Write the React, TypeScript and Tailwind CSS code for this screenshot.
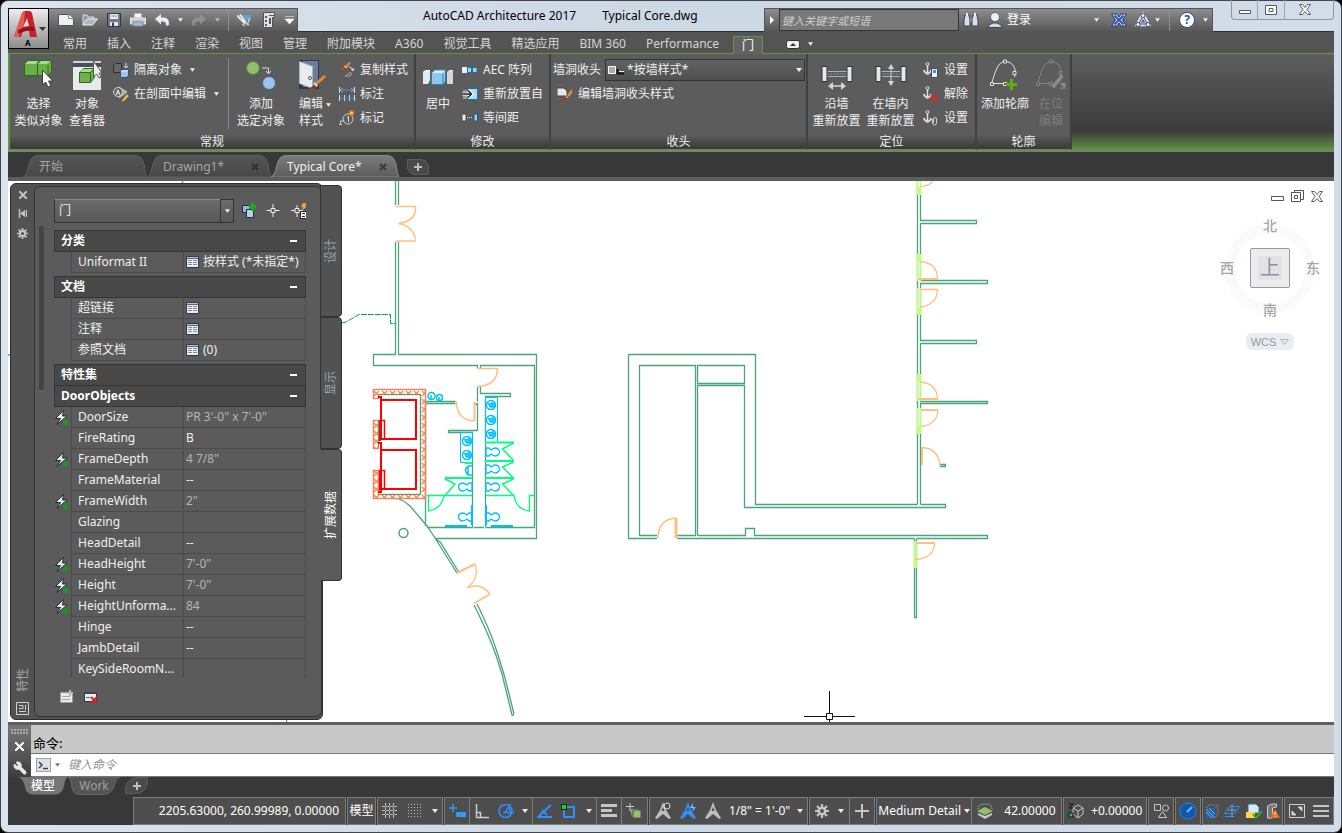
import type { ReactNode } from 'react';
import { Wrench } from 'lucide-react';

type Kids = { children?: ReactNode };

function Svg({ w = 16, h = 16, children }: Kids & { w?: number; h?: number }) {
  return (
    <svg width={w} height={h} viewBox={`0 0 ${w} ${h}`} fill="none" className="shrink-0" aria-hidden="true">
      {children}
    </svg>
  );
}

const Caret = ({ color = '#f0f0f0', size = 6 }: { color?: string; size?: number }) => (
  <svg width={size} height="4" viewBox="0 0 6 4" className="shrink-0" aria-hidden="true">
    <path d="M0 0h6L3 4z" fill={color} />
  </svg>
);

/* ---------- quick access icons ---------- */

const NewIcon = () => (
  <Svg><path d="M.5 2.5h10l5 4v7H.5z" fill="#eef0f2" stroke="#4d5560" /><path d="M10.500 2.500v4h5" stroke="#7d8790" fill="#fff" /></Svg>
);
const OpenIcon = () => (
  <Svg><path d="M1 13V3h4l1 2h6v2" fill="#8f98a3" stroke="#dde2e8" /><path d="M1 13l4-6h10.500l-5 6z" fill="#aeb6c0" stroke="#eef1f4" /></Svg>
);
const SaveIcon = () => (
  <Svg><path d="M1.500 1.500h13v13h-13z" fill="#6f7a88" stroke="#303845" /><path d="M4 2h8v5H4z" fill="#e9edf1" /><path d="M5 4h6" stroke="#7a8490" /><path d="M4 10h8v4H4z" fill="#dfe4e9" /><path d="M6 10.500h2V14H6z" fill="#39424e" /></Svg>
);
const PrintIcon = () => (
  <Svg><path d="M4 1h8v5H4z" fill="#f5f7f9" stroke="#7d8792" /><path d="M.500 6h15v6H.500z" fill="#c9cfd6" stroke="#e9ecef" /><path d="M3 10h10v4H3z" fill="#dbe7f3" stroke="#6b7683" /><path d="M4 12h8" stroke="#4a8fd0" /></Svg>
);
const UndoIcon = ({ flip = false, color = '#e9edf1' }: { flip?: boolean; color?: string }) => (
  <svg width="16" height="16" viewBox="0 0 16 16" className={flip ? '-scale-x-100' : ''} aria-hidden="true">
    <path d="M1 7l6-5v3.500h2.500q6 0 5.500 7l-1 1h-2q.500-4-3.500-4H7v3z" fill={color} />
  </svg>
);
const PlansIcon = () => (
  <Svg><path d="M4 3h11l-4 6z" fill="#56a8dc" /><path d="M0 3.500l8 8M3 2.500l6 8" stroke="#e6e9ec" strokeWidth="2" /><path d="M5 12l3 2M8 11l4 2M13 6l-3 7" stroke="#c4cad1" strokeWidth="1.500" /></Svg>
);
const SheetIcon = () => (
  <Svg><path d="M2.500 .500h11v5h-2v10h-9z" fill="#dfe3e7" stroke="#4c545e" /><path d="M4 4h2v2H4zM4 8h2v2H4zM4 12h2v2H4zM8 6h2v6H8z" fill="#525b66" /><path d="M8 3.500h5" stroke="#525b66" /></Svg>
);

const Gear = ({ size }: { size: number }) => (
  <svg width={size} height={size} viewBox="0 0 16 16" fill="none" aria-hidden="true">
    <path d="M8 0v16M0 8h16M2.300 2.300l11.400 11.400M13.700 2.300L2.300 13.700" stroke="#c6c6c6" strokeWidth="2.500" />
    <circle cx="8" cy="8" r="5" fill="#c6c6c6" />
    <circle cx="8" cy="8" r="2.200" fill="#505050" />
  </svg>
);

/* ---------- ribbon large icons ---------- */

const SelectSimilar = () => (
  <Svg w={32} h={32}>
    <path d="M1.500 5.500l3-4h12l-2 4v11h-13z" fill="#6aae4a" stroke="#2c6b1d" />
    <path d="M14.500 5.500l3-4h11v11l-3 4h-11z" fill="#6aae4a" stroke="#2c6b1d" />
    <path d="M2 5l3-3h10l-2 3zM15 5l3-3h9l-3 3z" fill="#a7dc8c" />
    <path d="M25 6v10" stroke="#2c6b1d" />
    <path d="M19.500 11v15l3-3 2.500 5 3-1.500-2.500-4.500h4.500z" fill="#fff" stroke="#3b3b3b" />
  </Svg>
);
const ObjectViewer = () => (
  <Svg w={32} h={32}>
    <path d="M2 3h28v28H2z" fill="#e8ebee" /><path d="M2 2h28v6H2z" fill="#4a4f57" /><path d="M2 2h28v2H2z" fill="#cfd4da" />
    <path d="M8.500 13.500l4-4h11v9l-4 5h-11z" fill="#6fb04e" stroke="#2c6b1d" /><path d="M8.500 13.500h11l4-4M19.500 13.500v10" stroke="#2c6b1d" />
    <path d="M9 13l3-3h10l-3 3z" fill="#a7dc8c" />
    <path d="M22.500 2v16l3-3 2.500 4 2-1-2-4h3z" fill="#eee" stroke="#555" />
  </Svg>
);
const AddSelected = () => (
  <Svg w={32} h={32}>
    <circle cx="8" cy="9" r="6.500" fill="#8fc06e" stroke="#4f7f36" /><circle cx="24" cy="24" r="6.500" fill="#9cc3ec" stroke="#3e628f" />
    <path d="M17 9h6.500v5M21 12l2.500 3 2.500-3" stroke="#dadada" />
  </Svg>
);
const EditStyle = () => (
  <Svg w={32} h={32}>
    <path d="M4 1h20v29H4z" fill="#2e3846" /><path d="M8 2h15v26H8z" fill="#6b7f97" /><path d="M4.500 2.500l13 5v22l-13-5z" fill="#e9ecef" stroke="#aeb5bd" />
    <circle cx="15" cy="19" r="1.500" fill="#fff" stroke="#555" />
    <path d="M20 24l9-8 2 2-9 8z" fill="#e08a3c" /><path d="M14 29q4-1 5-4l3 3q-3 4-8 2z" fill="#7a4522" /><path d="M19 24l3 3" stroke="#ddd" strokeWidth="2" />
  </Svg>
);
const CenterIcon = () => (
  <Svg w={32} h={32}>
    <path d="M1 13l3-2h4v10l-2 4H1z" fill="#e6e9ec" /><path d="M25 13l3-2h3v14h-6z" fill="#d3d7dc" /><path d="M1 13l3-2h4l-2 2zM25 13l3-2h3" fill="#fff" />
    <path d="M9.500 14.500l3-3.500h11v11l-2 3.500h-12z" fill="#8cc9ea" stroke="#2e7fb5" /><path d="M10 14l3-2.500h10l-2 2.500z" fill="#d2effd" /><path d="M21 14.500v11" stroke="#2e7fb5" />
  </Svg>
);
const AlongWall = ({ inside = false }: { inside?: boolean }) => (
  <Svg w={32} h={32}>
    <path d="M6 12h20v6H6z" fill="#565c64" /><path d="M6 12.500h20M6 17.500h20" stroke="#aab1bb" /><path d="M6 15h20" stroke="#8d949d" strokeDasharray="2 1" />
    <path d="M1 7.500h5v15H1zM26 7.500h5v15h-5z" fill="#e3e7ee" stroke="#2f343b" />
    {inside ? (
      <><path d="M16 6v20" stroke="#d4d4d4" /><path d="M16 5l3 5h-6zM16 27l3-5h-6z" fill="#d4d4d4" /></>
    ) : (
      <><path d="M8 27h16" stroke="#d4d4d4" strokeWidth="1.500" /><path d="M7 27l5-4v8zM25 27l-5-4v8z" fill="#d4d4d4" /></>
    )}
  </Svg>
);
const ProfileIcon = ({ edit = false }: { edit?: boolean }) => {
  const c = edit ? '#858585' : '#e2e2e2';
  return (
    <Svg w={32} h={32}>
      <path d="M2.500 24.500C6 15 8 2.500 16 2.500S28 10 25.500 18M3 24.500h13" stroke={c} />
      <path d="M14.500 1h3v3h-3zM1.500 23.500h3v3h-3zM24 12.500h3v3h-3zM14.500 23.500h3v3h-3z" fill="#5c5c5c" stroke={c} />
      {edit ? <path d="M17 27l9-11 2 2-9 11zM25 24l5 5v-5M30 29h-5" fill="#8b8b8b" stroke="#8b8b8b" /> : <path d="M22.500 20v11M17 25.500h11" stroke="#5cb010" strokeWidth="3" />}
    </Svg>
  );
};

/* ---------- ribbon small icons ---------- */

const IsolateIcon = () => (
  <Svg><path d="M.500 3.500l2-2h6v7l-2 2h-6z" fill="#666" stroke="#2e2e2e" /><path d="M13 1v5M11 4l2 2 2-2" stroke="#ddd" /><path d="M7.500 9.500l2-2h6v6l-2 2h-6z" fill="#9cc3ec" stroke="#33557f" /><path d="M8 9h6l1-1" stroke="#e8f3ff" /></Svg>
);
const SectionEditIcon = () => (
  <Svg><path d="M6 1l8 5-8 6" fill="#aaa" stroke="#ccc" /><circle cx="5" cy="6" r="4.500" fill="#666" stroke="#d0d0d0" /><path d="M3 9l2-5 2 5M4 7h2" stroke="#eee" /><path d="M9 14l5-6 2 2-5 5-2 1z" fill="#f1c14c" stroke="#7a5a1a" strokeWidth=".5" /></Svg>
);
const CopyStyleIcon = () => (
  <Svg><path d="M6 4l4-4 2 1-4 5z" fill="#e0843a" /><path d="M0 7q3 0 5-3l3 2q-2 5-8 1z" fill="#9a5527" /><path d="M5 4l3 2" stroke="#eee" /><path d="M10 5q4 0 4 4M12 7l2 2 1-3" stroke="#ccc" /><path d="M6 14q3-1 5-4l2 2q-2 4-7 2z" fill="#777" stroke="#999" /></Svg>
);
const DimIcon = () => (
  <Svg><path d="M.500 1v6M15.500 1v6M.500 9v6M5.500 9v6M10.500 9v6M15.500 9v6" stroke="#ddd" /><path d="M1 4h14M1 12h14" stroke="#3f8fe8" /><path d="M4 2L1 4l3 2M12 2l3 2-3 2" stroke="#6aaef5" /></Svg>
);
const TagIcon = () => (
  <Svg><path d="M1.500 15v-4h4M0 14.500h3" stroke="#ccc" /><circle cx="9" cy="9" r="5" stroke="#ccc" /><path d="M8 7.500l1.500-1V12" stroke="#ddd" /><path d="M12.500 0v6M9.500 3h6M10.500 1l4 4M14.500 1l-4 4" stroke="#f26b1d" strokeWidth="1.500" /><circle cx="12.500" cy="3" r="1.500" fill="#ffd24a" /></Svg>
);
const ArrayIcon = () => (
  <Svg><path d="M0 5h5v6H0z" fill="#eef1f4" /><path d="M5.500 5.500h4v5h-4zM10.500 5.500h4.500v5h-4.500z" fill="#9bd3f2" stroke="#1f6ca8" /></Svg>
);
const MoveFromIcon = () => (
  <Svg><path d="M1 4h5v9H1z" fill="#999" /><path d="M5.500 2.500h10v11h-10z" fill="#a9dcf5" stroke="#1f6ca8" /><path d="M0 8h10M6 4.500L10 8l-4 3.500" stroke="#fff" strokeWidth="3" /><path d="M0 8h9M6 4.500L9.500 8 6 11.500" stroke="#222" strokeWidth="1.500" /></Svg>
);
const SpaceIcon = () => (
  <Svg><path d="M0 4h4v7H0z" fill="#eee" stroke="#444" /><path d="M12 4h3.500v7H12z" fill="#9bd3f2" stroke="#1f4c88" /><path d="M5 7.500h6" stroke="#ddd" strokeDasharray="1 1" /></Svg>
);
const EndcapIcon = () => (
  <Svg><path d="M0 2h7l3 3v5H0z" fill="#e6e9ec" stroke="#444" /><path d="M3 13q3 0 5-4l3 3q-3 4-8 1z" fill="#8a4f27" /><path d="M10 9l5-6v4l-3 4z" fill="#e08a3c" /><path d="M8 9l3 3" stroke="#ddd" /></Svg>
);
const WallCapIcon = () => (
  <Svg><path d="M.500 4.500h7v7h-7z" fill="#aaa" stroke="#fff" /><path d="M9.500 7v4.500H16" stroke="#111" strokeWidth="2" /><path d="M11 9.500h5" stroke="#eee" /></Svg>
);
const AnchorIcon = ({ kind }: { kind: 'set' | 'release' | 'attach' }) => (
  <Svg>
    <path d="M4.500 3v8" stroke="#e0e0e0" strokeWidth="1.500" /><circle cx="4.500" cy="2" r="1.500" stroke="#e0e0e0" /><path d="M0 8l2 0q0 2 2.500 2.500Q7 10 7 8h2q0 3-4.500 5Q0 11 0 8z" fill="#d4d4d4" />
    {kind === 'set' && <><path d="M8.500 6.500h6v9h-6z" fill="#eef3f8" stroke="#3c4a5a" /><path d="M10 8h3v3h-3z" fill="#3f8fe8" /></>}
    {kind === 'release' && <path d="M8 9l6 6M14 9l-6 6" stroke="#e02a20" strokeWidth="2" />}
    {kind === 'attach' && <path d="M9.500 9v4a2 2 0 004 0V9a1.500 1.500 0 00-3 0v4" stroke="#ccc" />}
  </Svg>
);

/* ---------- title bar ---------- */

function TitleBar() {
  return (
    <header className="flex h-8 border-b border-[#2e2e2e]">
      <div className="ml-10 mt-2 flex h-6 w-[250px] shrink-0 items-center gap-2 border border-[#555] bg-linear-to-b from-[#8d8d8d] to-[#585858] pl-[9px]">
        <button aria-label="新建"><NewIcon /></button>
        <button aria-label="打开"><OpenIcon /></button>
        <button aria-label="保存"><SaveIcon /></button>
        <button aria-label="打印"><PrintIcon /></button>
        <button aria-label="放弃" className="flex items-center gap-2"><UndoIcon /><Caret size={5} /></button>
        <button aria-label="重做" className="flex items-center gap-2"><UndoIcon flip color="#8f8f8f" /><Caret size={5} color="#bbb" /></button>
        <span className="h-full w-px bg-[#929292]" />
        <button aria-label="工具"><PlansIcon /></button>
        <button aria-label="图纸"><SheetIcon /></button>
        <button aria-label="自定义"><Svg w={9} h={8}><path d="M0 .500h9M0 3h9L4.500 8z" stroke="#fff" fill="#fff" strokeWidth=".5" /></Svg></button>
      </div>
      <div className="flex flex-1 gap-[26px] whitespace-nowrap pl-[125px] pt-[6px] text-xs leading-5 text-black">
        <span>AutoCAD Architecture 2017</span>
        <span>Typical Core.dwg</span>
      </div>
      <div className="mr-[18px] mt-2 flex h-6 w-[449px] shrink-0 items-center border border-[#555] bg-linear-to-b from-[#8d8d8d] to-[#585858] text-xs text-white">
        <button aria-label="展开" className="flex w-[14px] justify-center"><Svg w={5} h={8}><path d="M0 0l4 4-4 4z" fill="#fff" /></Svg></button>
        <input
          aria-label="搜索"
          placeholder="键入关键字或短语"
          className="h-full w-[180px] border border-[#333] bg-[#787878] px-[2px] text-[11px] italic placeholder:text-[#cfcfcf]"
        />
        <button aria-label="查找" className="ml-1">
          <Svg><path d="M2 3h4l1 4v7H1V8zM10 3h4l1 5v6H9V7z" fill="#d8dde6" stroke="#39424e" /><path d="M6 6h4v4H6z" fill="#7a8490" /><path d="M3 1h2v3H3zM11 1h2v3h-2z" fill="#eef1f5" /></Svg>
        </button>
        <button className="ml-2 flex items-center gap-1">
          <Svg><circle cx="8" cy="5" r="4.500" fill="#eef1f5" stroke="#5c6674" /><path d="M1 15.500q0-3 5-4.500h4q5 1.500 5 4.500z" fill="#d5dae2" stroke="#444" /></Svg>
          登录
        </button>
        <button aria-label="帐户" className="ml-auto"><Caret size={5} /></button>
        <button aria-label="Exchange" className="ml-3">
          <Svg><path d="M.500 2h5.500l2 3 2-3h5.500l-4 6 4 6H10l-2-3-2 3H.500l4-6z" fill="#cfdcf5" stroke="#22356e" /><path d="M3.500 3.500L8 8l-4.500 4.500M12.500 3.500L8 8l4.500 4.500" stroke="#2f55b0" strokeWidth="2" /></Svg>
        </button>
        <button aria-label="A360" className="ml-2 flex items-center gap-1">
          <Svg><path d="M8 3L2.500 12.500h11z" stroke="#e3e9f6" strokeWidth="3.500" /><path d="M8 4L3.500 12h9z" stroke="#33497c" /><circle cx="8" cy="3.500" r="2" fill="#fff" stroke="#33497c" /><circle cx="3" cy="12.500" r="2" fill="#fff" stroke="#33497c" /><circle cx="13" cy="12.500" r="2" fill="#fff" stroke="#33497c" /></Svg>
          <Caret size={5} />
        </button>
        <span className="mx-[9px] h-full w-px bg-[#929292]" />
        <button aria-label="帮助" className="mr-1 flex items-center gap-2">
          <span className="flex size-4 items-center justify-center rounded-full border border-[#33507e] bg-white text-xs font-bold text-[#1c58ae]">?</span>
          <Caret size={5} />
        </button>
      </div>
      <div className="flex h-5 w-[103px] shrink-0 rounded-b border border-t-0 border-[#8d98a5]">
        <button aria-label="最小化" className="flex w-[25px] items-center justify-center"><Svg w={12} h={10}><path d="M.500 5.500h11v3H.500z" fill="#fff" stroke="#545b66" /></Svg></button>
        <button aria-label="还原" className="flex w-7 items-center justify-center border-x border-[#9ba6b2]"><Svg w={12} h={10}><path d="M.500.500h11v9H.500zM4 3.500h4v3H4z" fill="#fff" stroke="#545b66" /></Svg></button>
        <button aria-label="关闭" className="flex flex-1 items-center justify-center pr-2"><CloseX /></button>
      </div>
    </header>
  );
}

const CloseX = () => (
  <Svg w={12} h={11}><path d="M.500.500h3L6 3.500l2.500-3h3L8 5.500l3.500 5h-3L6 7.500l-2.500 3h-3L4 5.500z" fill="#fff" stroke="#545b66" /></Svg>
);

function AppButton() {
  return (
    <button aria-label="应用程序菜单" className="absolute left-0 top-[7px] flex h-[41px] w-[41px] flex-col border border-black bg-linear-to-b from-[#ededed] to-[#8d8d8d]">
      <Svg w={39} h={39}>
        <path d="M5 28L13 4q1-2 3-2h4q2 0 3 2l5 24h-7l-1-6-6-1-2 7z" fill="#c8202a" />
        <path d="M5 28L13 4q1-2 3-2l-1 12-5 14z" fill="#e65a5a" />
        <path d="M18 9l2 8-6 1z" fill="#d9d9d9" /><path d="M9 21q8-4 16-3l1 4q-8-2-17 3z" fill="#951019" />
        <path d="M30 18h7l-3.500 4z" fill="#2b3340" />
        <text x="16" y="37" fontSize="8" fontWeight="700" fill="#000">A</text>
      </Svg>
    </button>
  );
}

/* ---------- ribbon ---------- */

const ribbonTabs = ['常用', '插入', '注释', '渲染', '视图', '管理', '附加模块', 'A360', '视觉工具', '精选应用', 'BIM 360', 'Performance'];

function RibbonTabs() {
  return (
    <nav className="flex h-[21px] items-end bg-[#545454] pl-[45px] text-xs text-[#d4d4d4]">
      {ribbonTabs.map((tab) => (
        <button key={tab} className="whitespace-nowrap px-[10px] leading-[18px]">{tab}</button>
      ))}
      <button className="relative top-px ml-1 h-[18px] w-[30px] border border-b-0 border-[#619443] bg-[#636363] leading-4 text-white">门</button>
      <button aria-label="最小化功能区" className="ml-[23px] flex h-[18px] items-center gap-2">
        <Svg w={14} h={9}><rect x=".5" y=".5" width="13" height="8" rx="2" fill="#eee" stroke="#333" /><path d="M4 6h6L7 3z" fill="#333" /></Svg>
        <Caret size={5} />
      </button>
    </nav>
  );
}

function BigButton({ icon, lines, caret, off, w }: { icon: ReactNode; lines: string[]; caret?: boolean; off?: boolean; w: string }) {
  return (
    <button disabled={off} className={`flex shrink-0 flex-col items-center whitespace-nowrap pt-[5px] ${w} ${off ? 'text-[#7c7c7c]' : 'text-[#f0f0f0]'}`}>
      {icon}
      <span className="relative mt-1 block leading-[17px]">
        {lines.map((l) => <span key={l} className="block">{l}</span>)}
        {caret && <span className="absolute -right-2 top-2"><Caret size={5} /></span>}
      </span>
    </button>
  );
}

function SmallButton({ icon, label, caret }: { icon: ReactNode; label: string; caret?: boolean }) {
  return (
    <button className="flex h-6 items-center gap-[5px] whitespace-nowrap text-[#f0f0f0]">
      {icon}
      {label}
      {caret && <span className="ml-[3px]"><Caret size={5} /></span>}
    </button>
  );
}

function Panel({ title, w, children }: Kids & { title: string; w: string }) {
  return (
    <section className={`flex shrink-0 flex-col border-b border-r-2 border-b-[#619443] border-r-[#414141] bg-[#5c5c5c] ${w}`}>
      <div className="flex flex-1 items-start">{children}</div>
      <h2 className="h-[14px] bg-linear-to-b from-[#5c5c5c] to-[#383838] text-center leading-[14px] text-[#f0f0f0]">{title}</h2>
    </section>
  );
}

function Ribbon() {
  return (
    <div className="flex h-[99px] overflow-hidden border-b-2 border-l-2 border-t border-b-[#76846e] border-l-[#619443] border-t-[#619443] bg-linear-to-b from-[#5e5e5e] via-[#3b3b3b] via-80% to-[#619443] text-xs">
      <Panel title="常规" w="w-[406px]">
        <BigButton w="w-[57px]" icon={<SelectSimilar />} lines={['选择', '类似对象']} />
        <BigButton w="w-10" icon={<ObjectViewer />} lines={['对象', '查看器']} />
        <div className="ml-[6px] mt-1 w-28">
          <SmallButton icon={<IsolateIcon />} label="隔离对象" caret />
          <SmallButton icon={<SectionEditIcon />} label="在剖面中编辑" caret />
        </div>
        <span className="ml-[3px] mt-1 h-[72px] w-px bg-[#858585]" />
        <BigButton w="w-[64px]" icon={<AddSelected />} lines={['添加', '选定对象']} />
        <BigButton w="w-9" icon={<EditStyle />} lines={['编辑', '样式']} caret />
        <div className="ml-[10px] mt-1">
          <SmallButton icon={<CopyStyleIcon />} label="复制样式" />
          <SmallButton icon={<DimIcon />} label="标注" />
          <SmallButton icon={<TagIcon />} label="标记" />
        </div>
      </Panel>
      <Panel title="修改" w="w-[135px]">
        <BigButton w="w-11" icon={<CenterIcon />} lines={['居中']} />
        <div className="ml-[2px] mt-1">
          <SmallButton icon={<ArrayIcon />} label="AEC 阵列" />
          <SmallButton icon={<MoveFromIcon />} label="重新放置自" />
          <SmallButton icon={<SpaceIcon />} label="等间距" />
        </div>
      </Panel>
      <Panel title="收头" w="w-[257px]">
        <div className="w-full pl-[2px] pr-[1px] pt-1 text-[#f0f0f0]">
          <div className="flex h-6 items-center gap-1">
            <label htmlFor="endcap">墙洞收头</label>
            <div className="relative flex-1">
              <select id="endcap" className="h-[22px] w-full appearance-none border border-[#333] bg-linear-to-b from-[#636363] to-[#505050] pl-[21px] text-xs">
                <option>*按墙样式*</option>
              </select>
              <span className="pointer-events-none absolute left-[3px] top-[3px]"><WallCapIcon /></span>
              <span className="pointer-events-none absolute right-[2px] top-[9px] flex"><Caret size={8} /></span>
            </div>
          </div>
          <div className="pl-1"><SmallButton icon={<EndcapIcon />} label="编辑墙洞收头样式" /></div>
        </div>
      </Panel>
      <Panel title="定位" w="w-[169px]">
        <BigButton w="w-[57px]" icon={<AlongWall />} lines={['沿墙', '重新放置']} />
        <BigButton w="w-[51px]" icon={<AlongWall inside />} lines={['在墙内', '重新放置']} />
        <div className="ml-[7px] mt-1">
          <SmallButton icon={<AnchorIcon kind="set" />} label="设置" />
          <SmallButton icon={<AnchorIcon kind="release" />} label="解除" />
          <SmallButton icon={<AnchorIcon kind="attach" />} label="设置" />
        </div>
      </Panel>
      <Panel title="轮廓" w="w-[95px]">
        <BigButton w="w-[56px]" icon={<ProfileIcon />} lines={['添加轮廓']} />
        <BigButton w="w-9" icon={<ProfileIcon edit />} lines={['在位', '编辑']} off />
      </Panel>
    </div>
  );
}

/* ---------- drawing tabs ---------- */

function DrawingTab({ label, w, active, closable }: { label: string; w: string; active?: boolean; closable?: boolean }) {
  return (
    <div className={`relative flex h-[22px] shrink-0 items-center justify-between pl-4 pr-3 pt-px ${w}`}>
      <svg className="absolute inset-0 h-full w-full" viewBox="0 0 124 22" preserveAspectRatio="none" aria-hidden="true">
        <defs>
          <linearGradient id={active ? 'tabOn' : 'tabOff'} x2="0" y2="1">
            <stop stopColor={active ? '#7c7c7c' : '#555'} /><stop offset="1" stopColor={active ? '#5c5c5c' : '#474747'} />
          </linearGradient>
        </defs>
        <path d="M0 22Q4 20 5 13Q7 1 14 .5H112Q119 .5 121 9Q122 19 124 22z" fill={active ? 'url(#tabOn)' : 'url(#tabOff)'} stroke={active ? '#8a8a8a' : '#5e5e5e'} />
      </svg>
      <button className={`relative ${active ? 'text-[#f2f2f2]' : 'text-[#a5a5a5]'}`}>{label}</button>
      {closable && (
        <button aria-label={`关闭 ${label}`} className="relative">
          <Svg w={8} h={8}><path d="M1 1l6 6M7 1L1 7" stroke={active ? '#3c3c3c' : '#303030'} strokeWidth="2" /></Svg>
        </button>
      )}
    </div>
  );
}

function DrawingTabs() {
  return (
    <div className="flex h-[29px] items-end border-b-4 border-[#5d5d5d] bg-[#383838] pl-[15px] text-xs">
      <DrawingTab label="开始" w="w-[124px]" />
      <DrawingTab label="Drawing1*" w="w-[124px]" closable />
      <DrawingTab label="Typical Core*" w="w-[128px]" active closable />
      <button aria-label="新图形" className="mb-[2px] ml-2 flex h-4 w-[22px] items-center justify-center rounded-tr-lg rounded-bl-lg border border-[#5c5c5c] bg-[#4a4a4a]">
        <Svg w={8} h={8}><path d="M4 0v8M0 4h8" stroke="#bdbdbd" strokeWidth="2" /></Svg>
      </button>
    </div>
  );
}

/* ---------- floor plan ---------- */

const WALL = '#4aa57c';
const DOOR = '#ffbf7f';
const LIME = '#bfff7f';
const FIXTURE = '#00bfff';
const STALL = '#00ff7f';

const Sink = ({ x, y }: { x: number; y: number }) => (
  <g>
    <circle cx={x} cy={y} r="4.500" />
    <path d={`M${x - 3} ${y - 2}q3 3 3 4h3q1-3 -2-5`} />
    <circle cx={x} cy={y} r="1.500" />
  </g>
);

const Toilet = ({ x, y, flip }: { x: number; y: number; flip?: boolean }) => (
  <path
    transform={`translate(${x} ${y}) scale(${flip ? -1 : 1} 1)`}
    d="M0-4v8h3l2-2q5 4 8 0q1-2 0-4q-3-4-8 0l-2-2z"
  />
);

function FloorPlan() {
  return (
    <svg className="absolute inset-0 h-full w-full" viewBox="8 181 1326 541" preserveAspectRatio="xMinYMin slice" fill="none" aria-label="Typical Core">
      <defs>
        <pattern id="hatch" width="8" height="8" patternUnits="userSpaceOnUse" x="373" y="390">
          <path d="M1 1l5 5M6 1L1 6" stroke="#f08a2c" strokeWidth="1.200" />
        </pattern>
      </defs>

      <g stroke={WALL} strokeWidth="1.300">
        <path d="M182.500 181v3M8 355h2M286.500 718v4" />
        <path d="M395.500 181v24M398.500 181v24M395.500 242v112.500H373.500v11H477.500v3M398.500 242v112.500H536.500v184H435.500M480.500 368v-2.500h54v162h-48.500M474 527.500h10" />
        <path d="M477.500 387v14.500M480.500 387v6.500h30v3H485.500v131M477.500 403v27.500H448.500v2h24v95H427" />
        <path d="M426 401.500h29.500M426 403.500h29.500M425.500 404v122M474 404h4" />
        <path d="M399 499q6 2 11 7l17 20 8 12 22 35M435.500 538.500l5 4 18.500 30" />
        <path d="M474 605q11 22 17 37t11 32l10 41h2M477 604q12 24 18 42t10 32l9 36" />
        <circle cx="403.500" cy="533" r="4.500" strokeWidth="1.500" />
        <path d="M628.500 354.500h127v150h162M628.500 354.500v184H657M657 535.500H639.500v-170h56v170H677" />
        <path d="M697.500 365.500h47v18h-47zM697.500 535.500v-150h47v122h201v-3h-25M697.500 535.500h48v-7h9v7h233v3h-71M677 538.500h237.500" />
        <path d="M917.500 181v323.500M920.500 194v26.500h56v3h-56v57h67v3h-67v57h56v3h-56v58h67v2h-67v101" />
        <path d="M914.500 538.500v79h2v-79M940 464.500h5.500v2H940" />
      </g>
      <path d="M342 323l4-1 13-7.500h31.500v9h5" stroke="#00a651" strokeDasharray="6 1" />

      {/* doors in the right-hand wall */}
      <g stroke={LIME}>
        <path d="M917.500 181v13M920.500 181v13M917.500 254v27M920.500 254v27M917.500 288v27M920.500 288v27M917.500 374v27M920.500 374v27M917.500 408v26M920.500 408v26M914.500 541v27M916.500 541v27" strokeWidth="1.500" />
        <path d="M917 187h4v8h-4zM917 254h4v7h-4zM917 308h4v7h-4zM917 374h4v7h-4zM917 426h4v8h-4zM914 560h3v8h-3z" fill={LIME} stroke="none" />
      </g>
      <g stroke={DOOR}>
        <path d="M920 186.500q8 0 13-5M920 261.500q17 1 17.500 17M920 307q17-2 17.500-17.500H920M920 382q16 1 17.500 16M921 426.500q16-2 17-16M922 447.500q17 1 18 19M915 559.500q19-1 19.500-16" strokeWidth="1.300" />
        <path d="M918 279h20M918 399h20M921 410h17M922 447v18M916 543h19" strokeWidth="2" />
        <path d="M396 206.500h19.500v4q-2 11-17 13q15 3 17 16M396 241h20" strokeWidth="1.500" />
        <path d="M477 368.500h20.500q0 17-20 18M456 401q1 19 18 20" strokeWidth="1.500" />
        <path d="M474.500 402v19" strokeWidth="2" />
        <path d="M676 518v20" strokeWidth="3" />
        <path d="M658 538v-3q2-16 18-17" strokeWidth="1.500" />
        <path d="M457 573l18-9" strokeWidth="2" />
        <path d="M475 564q5 14-8 24q14-6 23 6" strokeWidth="1.300" />
        <path d="M490 594l-16 9.500" strokeWidth="1.500" />
      </g>

      {/* elevator shaft */}
      <path d="M373.500 389.500h52v109h-52v-28h5v24h42v-100h-42v4h-5z" fill="url(#hatch)" stroke="#f47f6c" strokeWidth="1.500" />
      <path d="M373.500 420.500h5v28h-5z" fill="url(#hatch)" stroke="#f47f6c" strokeWidth="1.500" />
      <path d="M378.500 394.500h42v100h-42M378.500 420.500v28" stroke={WALL} />
      <g stroke="#f00">
        <path d="M381 400h35v39h-35zM381 450h35v39h-35z" strokeWidth="2" />
        <path d="M378 397h3v3M380 420v21M378 443h3v7M378 492h3v-3M380 470v20" strokeWidth="2" />
        <path d="M381 420.500h3.500v18M381 470.500h3.500v18" strokeWidth="1.500" />
      </g>

      {/* restrooms */}
      <g stroke={FIXTURE}>
        <path d="M485.500 397.500h12v45h-12zM460.500 432.500h12v30h-12z" />
        <g strokeWidth="1.500">
          <Sink x={491} y={405} /><Sink x={491} y={420} /><Sink x={491} y={434} />
          <Sink x={467} y={441} /><Sink x={467} y={455} />
          <circle cx="431.500" cy="396" r="3.500" /><circle cx="439.500" cy="397.500" r="3" /><path d="M431 395v5M439 397v3" />
          <path d="M472 466h-4q-5 4 0 9h4M468 467v7" />
        </g>
        <g strokeWidth="1.300">
          <Toilet x={486} y={452} /><Toilet x={486} y={469} /><Toilet x={486} y={487} /><Toilet x={486} y={517} />
          <Toilet x={472} y={487} flip /><Toilet x={472} y={517} flip />
        </g>
        <path d="M445 526h22M491 526h22M472 505v20M486 505v20" strokeWidth="2" />
      </g>
      <g stroke={STALL}>
        <path d="M485 442.500h29M485 461h29M485 478h29M445 478h27M465 463h7" strokeWidth="2" />
        <path d="M513.500 443l-11 6 11 11.500M513.500 462l-11 5 11 11M513.500 479l-11 5 11 11.500M445 479l10 5-10 11.500" strokeWidth="1.500" />
        <path d="M427 495.500h45M486 495.500h28q2 14 15.500 15.500v-15.500h5M428.500 495v16q13-2 15.500-15" strokeWidth="1.300" />
      </g>

      {/* cursor */}
      <path d="M829.500 691v22M829.500 720v2M804 716.500h22M833 716.500h22M826.500 713.500h6v6h-6z" stroke="#111" />
    </svg>
  );
}

/* ---------- view controls ---------- */

function ViewControls() {
  return (
    <div className="absolute right-0 top-0 w-[120px] text-sm font-medium text-[#a6a6a6]">
      <div className="mt-[9px] flex justify-end gap-[7px] pr-[11px]">
        <button aria-label="最小化视口"><Svg w={13} h={12}><path d="M.500 6.500h12v4H.500z" fill="#fff" stroke="#555" /></Svg></button>
        <button aria-label="还原视口"><Svg w={13} h={12}><path d="M3.500.500h9v9h-9z" fill="#fff" stroke="#555" /><path d="M.500 2.500h9v9h-9zM3.500 5.500h3v3h-3z" fill="#fff" stroke="#555" /></Svg></button>
        <button aria-label="关闭视口"><CloseX /></button>
      </div>
      <div className="relative mt-[14px] flex flex-col items-center pr-2 leading-5">
        <span className="absolute left-[11px] top-2 size-[90px] rounded-full border-[10px] border-[#fafafa]" />
        <button className="relative">北</button>
        <div className="relative my-3 flex w-full items-center justify-between px-[6px]">
          <button>西</button>
          <button className="size-10 rounded-[2px] border border-[#999] bg-[#ececec] text-xl font-normal text-[#8d8f9a]">
            <span className="mx-auto flex size-6 items-center justify-center bg-[#e1e2e8] leading-6">上</span>
          </button>
          <button>东</button>
        </div>
        <button className="relative">南</button>
        <button className="mt-[13px] flex h-[17px] w-12 items-center justify-center gap-1 rounded-md bg-[#ebebf4] font-[Liberation_Sans] text-[11px] font-normal text-[#999]">
          WCS
          <Svg w={9} h={6}><path d="M.500.500h8l-4 5z" stroke="#b5b5b5" /></Svg>
        </button>
      </div>
    </div>
  );
}

/* ---------- properties palette ---------- */

type Prop = { name: string; value?: string; auto?: boolean; sheet?: boolean };

const classification: Prop[] = [{ name: 'Uniformat II', value: '按样式 (*未指定*)', sheet: true }];
const documentation: Prop[] = [
  { name: '超链接', sheet: true },
  { name: '注释', sheet: true },
  { name: '参照文档', value: '(0)', sheet: true },
];
const doorObjects: Prop[] = [
  { name: 'DoorSize', value: 'PR 3\'-0" x 7\'-0"', auto: true },
  { name: 'FireRating', value: 'B' },
  { name: 'FrameDepth', value: '4 7/8"', auto: true },
  { name: 'FrameMaterial', value: '--' },
  { name: 'FrameWidth', value: '2"', auto: true },
  { name: 'Glazing' },
  { name: 'HeadDetail', value: '--' },
  { name: 'HeadHeight', value: '7\'-0"', auto: true },
  { name: 'Height', value: '7\'-0"', auto: true },
  { name: 'HeightUnforma...', value: '84', auto: true },
  { name: 'Hinge', value: '--' },
  { name: 'JambDetail', value: '--' },
  { name: 'KeySideRoomN...' },
];

const BoltIcon = () => (
  <Svg w={14} h={15}><path d="M8.500.500L.500 8.500h5L2 14.500 12 6H7.500z" fill="#e4ecf7" stroke="#262b33" /><path d="M10.500 9v6M7.500 12h6" stroke="#12a012" strokeWidth="2" /></Svg>
);
const WorksheetIcon = () => (
  <Svg w={13} h={12}><path d="M.500.500h12v11H.500z" fill="#e9edf2" stroke="#2f3947" /><path d="M1 1.500h11" stroke="#b9c4d4" /><path d="M1 2.500h11" stroke="#56657c" /><path d="M2 4.500h4M7 4.500h4M2 6.500h4M7 6.500h4M2 8.500h4M7 8.500h4" stroke="#7f8ea3" /></Svg>
);

function GroupHeader({ title }: { title: string }) {
  return (
    <h3 className="border border-[#353535] bg-[#484848] font-bold text-white">
      <button className="flex h-5 w-full items-center justify-between px-[6px]">
        {title}
        <span className="mr-[2px] h-[2px] w-[7px] bg-white" />
      </button>
    </h3>
  );
}

function PropTable({ rows }: { rows: Prop[] }) {
  return (
    <table className="w-full table-fixed border-separate border-spacing-0">
      <colgroup><col className="w-[17px]" /><col className="w-[112px]" /><col /></colgroup>
      <tbody>
        {rows.map((row) => (
          <tr key={row.name} className="h-[21px]">
            <td className="p-0"><span className="flex pl-px">{row.auto && <BoltIcon />}</span></td>
            <th scope="row" className="whitespace-nowrap border-b border-l border-[#4b4b4b] p-0 pl-[6px] text-left font-normal text-[#f0f0f0]">{row.name}</th>
            <td className={`whitespace-nowrap border-x border-b border-[#4b4b4b] p-0 pl-[2px] ${row.auto ? 'text-[#b4b4b4]' : 'text-[#f0f0f0]'}`}>
              <span className="flex items-center gap-1">{row.sheet && <WorksheetIcon />}{row.value}</span>
            </td>
          </tr>
        ))}
      </tbody>
    </table>
  );
}

function Palette() {
  return (
    <aside className="absolute bottom-[2px] left-[2px] top-[2px] flex text-xs">
      <div className="flex w-[313px] rounded-md border border-[#2f2f2f] bg-[#525252]">
        <div className="flex w-[23px] shrink-0 flex-col items-center pt-[7px] text-[#c4c4c4]">
          <button aria-label="关闭"><Svg w={8} h={8}><path d="M0 0l8 8M8 0L0 8" stroke="#c4c4c4" strokeWidth="2" /></Svg></button>
          <button aria-label="自动隐藏" className="mt-[10px]"><Svg w={9} h={9}><path d="M1.500 0v9M8.500 1v7" stroke="#c4c4c4" strokeWidth="1.500" /><path d="M2 4.500L7 1v7z" fill="#c4c4c4" /></Svg></button>
          <button aria-label="特性" className="mt-[10px]"><Gear size={11} /></button>
          <span className="mt-auto rotate-180 [text-orientation:sideways] [writing-mode:vertical-rl] text-[#a5a5a5]">特性</span>
          <button aria-label="停靠" className="mb-1 mt-[10px]"><Svg w={13} h={13}><path d="M.500.500h12v12H.500zM3 3.500h4v3H3M3 9.500h7M9.500 3v5" stroke="#d0d0d0" /></Svg></button>
        </div>
        <div className="my-[2px] flex flex-1 rounded-md border border-[#333] bg-[#5b5b5b]">
          <div className="ml-1 mt-[39px] h-[164px] w-[5px] rounded-full bg-[#444]" />
          <div className="ml-[10px] flex w-[252px] flex-col overflow-hidden pt-[12px]">
            <div className="flex items-center">
              <div className="relative">
                <select aria-label="对象类型" className="h-6 w-[180px] appearance-none border border-[#333] border-t-[#888] bg-linear-to-b from-[#6b6b6b] to-[#585858] px-1 text-[#f0f0f0]">
                  <option>门</option>
                </select>
                <span className="pointer-events-none absolute right-0 top-0 flex h-6 w-[14px] items-center justify-center border border-[#333]"><Caret size={5} /></span>
              </div>
              <button aria-label="切换 PICKADD" className="ml-[7px]"><Svg><path d="M1.500 2.500h7v7h-7z" fill="#9cb7d8" stroke="#1e2c40" /><path d="M5.500 6.500h7v8h-7z" fill="#b9d0ec" stroke="#1e2c40" /><path d="M11.500 0v8M8 4h7" stroke="#12b012" strokeWidth="3" /></Svg></button>
              <button aria-label="选择对象" className="ml-2"><Svg><path d="M8 1v13M1.500 7.500h13" stroke="#eee" /><path d="M6 5.500h4v4H6z" fill="#5b5b5b" stroke="#eee" /></Svg></button>
              <button aria-label="快速选择" className="ml-[10px]"><Svg><path d="M6 2v12M0 7.500h12" stroke="#eee" /><path d="M4 5.500h4v4H4z" fill="#5b5b5b" stroke="#eee" /><path d="M12 0h4l-2 3h2l-5 5 1-4h-2z" fill="#ffa02f" /><path d="M9.500 8.500h6v7h-6z" fill="#fff" stroke="#222" /><path d="M11 10.500h3M11 13.500h3" stroke="#222" /></Svg></button>
            </div>
            <div className="mt-[7px]"><GroupHeader title="分类" /><PropTable rows={classification} /></div>
            <div className="mt-[3px]"><GroupHeader title="文档" /><PropTable rows={documentation} /></div>
            <div className="mt-[3px] flex min-h-0 flex-1 flex-col overflow-hidden">
              <GroupHeader title="特性集" />
              <div className="-mt-px"><GroupHeader title="DoorObjects" /></div>
              <PropTable rows={doorObjects} />
            </div>
            <div className="flex h-[38px] shrink-0 items-center gap-2 pl-[6px]">
              <button aria-label="添加特性集"><Svg><path d="M.500 3.500h12v10H.500z" fill="#e9e9e9" stroke="#9a9a9a" /><path d="M2 7.500h8M2 10.500h8" stroke="#aaa" /><path d="M10 1v6M7 4h6" stroke="#bbb" strokeWidth="2" /></Svg></button>
              <button aria-label="删除特性集"><Svg><path d="M.500 3.500h12v9H.500z" fill="#e9edf2" stroke="#2f3947" /><path d="M0 4h13" stroke="#39455a" strokeWidth="2" /><path d="M2 8.500h4" stroke="#666" /><path d="M7 8l6 6M13 8l-6 6" stroke="#d8231c" strokeWidth="2" /></Svg></button>
            </div>
          </div>
        </div>
      </div>
      <div className="-ml-[3px] mt-[2px] flex w-[22px] flex-col">
        {['设计', '显示', '扩展数据'].map((tab) => (
          <button
            key={tab}
            className={`flex h-[132px] w-[22px] items-center justify-center rounded-r border border-[#333] ${tab === '扩展数据' ? 'border-l-[#5b5b5b] bg-[#5b5b5b] text-white' : 'bg-[#525252] text-[#9aa3ad]'}`}
          >
            <span className="rotate-180 whitespace-nowrap [text-orientation:sideways] [writing-mode:vertical-rl]">{tab}</span>
          </button>
        ))}
      </div>
    </aside>
  );
}

/* ---------- command line and layouts ---------- */

function CommandLine() {
  return (
    <div className="flex h-[55px] border-t-[3px] border-[#5f5f5f]">
      <div className="flex w-[23px] shrink-0 flex-col items-center bg-linear-to-b from-[#787878] to-[#3e3e3e] pt-1">
        <Svg w={17} h={5}><path d="M0 1h17M0 4h17" stroke="#aaa" strokeWidth="2" strokeDasharray="2 1" /></Svg>
        <button aria-label="关闭命令行" className="mt-2"><Svg w={9} h={9}><path d="M0 0l9 9M9 0L0 9" stroke="#fff" strokeWidth="2" /></Svg></button>
        <button aria-label="自定义命令行" className="mt-[10px] -scale-x-100 text-[#e8e8e8]"><Wrench size={14} strokeWidth={2} fill="currentColor" /></button>
      </div>
      <div className="flex flex-1 flex-col">
        <p className="flex h-[29px] items-end border-b border-[#777] bg-[#c8c8c8] pl-[2px] font-[Noto_Sans_CJK_SC] text-[13px] leading-5 text-black">命令:</p>
        <div className="flex flex-1 items-center border-b border-[#777] bg-white pl-[5px]">
          <Svg w={15} h={14}><rect x=".5" y=".5" width="14" height="13" fill="#dde1e8" stroke="#9aa2ae" /><path d="M3 4l3 3-3 3M7 10.500h5" stroke="#3c4654" strokeWidth="1.500" /></Svg>
          <span className="ml-1"><Caret size={5} color="#777" /></span>
          <input aria-label="命令" placeholder="键入命令" className="ml-2 flex-1 text-xs italic outline-none placeholder:text-[#909090]" />
        </div>
      </div>
    </div>
  );
}

function LayoutTabs() {
  return (
    <div className="flex h-5 items-start bg-[#383838] pl-[10px] text-xs">
      <button className="relative h-[18px] w-[50px] font-medium leading-[18px] text-white">
        <svg className="absolute inset-0 h-full w-full" viewBox="0 0 50 18" preserveAspectRatio="none" aria-hidden="true"><path d="M0 0Q5 1 7 10Q8 17 14 17.500H38Q44 17 46 9Q47 1 50 0z" fill="#757575" /></svg>
        <span className="relative">模型</span>
      </button>
      <button className="relative h-[18px] w-[52px] leading-[18px] text-[#a0a0a0]">
        <svg className="absolute inset-0 h-full w-full" viewBox="0 0 54 18" preserveAspectRatio="none" aria-hidden="true"><path d="M0 0Q3 1 4 10Q5 17 11 17.500H38Q45 17 48 9Q50 1 54 0z" fill="#555" stroke="#666" /></svg>
        <span className="relative">Work</span>
      </button>
      <button aria-label="新布局" className="ml-[5px] flex h-[17px] w-[23px] items-center justify-center rounded-br-xl rounded-tl-xl border border-[#5e5e5e] bg-[#4a4a4a]">
        <Svg w={8} h={8}><path d="M4 0v8M0 4h8" stroke="#bdbdbd" strokeWidth="2" /></Svg>
      </button>
    </div>
  );
}

/* ---------- status bar ---------- */

function Cell({ w, label, children, open }: Kids & { w: string; label?: string; open?: boolean }) {
  const cls = `flex h-full shrink-0 items-center justify-around border border-[#7c7c7c] bg-[#4e4e4e] ${open ? 'border-l-0' : ''} ${w}`;
  return label ? <button aria-label={label} className={cls}>{children}</button> : <div className={cls}>{children}</div>;
}

const Scale = ({ color, extra }: { color: string; extra?: ReactNode }) => (
  <Svg w={18} h={18}><path d="M9 0l3 8 5 8-2 1-6-5-6 5-2-1 5-8z" fill={color} /><path d="M7.500 9L9 5l1.500 4z" fill="#4e4e4e" />{extra}</Svg>
);

function StatusBar() {
  return (
    <footer className="flex h-7 justify-end gap-px bg-[#383838] text-xs text-white">
      <Cell w="w-[213px]"><span className="ml-auto pr-[6px]">2205.63000, 260.99989, 0.00000</span></Cell>
      <Cell w="w-[29px]" label="模型空间"><span>模型</span></Cell>
      <div className="flex">
        <Cell w="w-[66px]">
          <Svg><path d="M3.500 0v16M7.500 0v16M11.500 0v16M0 3.500h15M0 7.500h15M0 11.500h15" stroke="#bdbdbd" strokeDasharray="3 1" /></Svg>
          <Svg><path d="M1 1.500h14M1 4.500h14M1 7.500h14M1 10.500h14M1 13.500h14" stroke="#bdbdbd" strokeDasharray="1 2" /></Svg>
          <Caret />
        </Cell>
      </div>
      <div className="flex">
        <Cell w="w-[26px]" label="动态输入"><Svg w={17}><path d="M4 1v8M0 5h8" stroke="#2f9bff" strokeWidth="1.500" /><rect x="7" y="9" width="10" height="5" rx="1" fill="#2f9bff" /></Svg></Cell>
        <Cell w="w-[63px]" open>
          <Svg><path d="M2.500 1v13.500H15M2.500 9.500h4v5" stroke="#cdcdcd" strokeWidth="1.500" /></Svg>
          <Svg><circle cx="7.500" cy="8" r="6.500" stroke="#2f8fff" strokeWidth="1.500" /><path d="M7.500 9l5-8M5 9.500h11M11 5q2 2 1 7" stroke="#2f8fff" strokeWidth="1.500" /></Svg>
          <Caret />
        </Cell>
        <Cell w="w-[64px]" open>
          <Svg><path d="M14 2L1 14h14" stroke="#2f8fff" strokeWidth="2" /><path d="M5 7l5 5" stroke="#2f8fff" strokeWidth="2" /></Svg>
          <Svg><path d="M3 4h10v10H3z" stroke="#2f8fff" strokeWidth="2" /><path d="M.500 1.500h5v5h-5z" fill="#19d219" stroke="#0a2a0a" /></Svg>
          <Caret />
        </Cell>
        <Cell w="w-[25px]" label="线宽" open><Svg><path d="M0 2.500h16M0 7.500h11M0 12.500h16" stroke="#c6c6c6" strokeWidth="3" /></Svg></Cell>
        <Cell w="w-[26px]" label="选择循环" open><Svg w={17}><path d="M4 0v8M0 3.500h8" stroke="#ccc" /><path d="M4 6h8v8H6z" fill="#9a9a9a" /><path d="M7 7h8v8H7z" fill="#94c070" stroke="#4e4e4e" /></Svg></Cell>
      </div>
      <Cell w="w-[159px]">
        <Scale color="#bdbdbd" extra={<circle cx="13" cy="4" r="3" stroke="#ddd" />} />
        <Scale color="#2f8fff" extra={<path d="M14 1l-3 5h3l-1 4 4-5h-3z" fill="#6dbbff" />} />
        <Scale color="#bdbdbd" />
        <span>1/8" = 1'-0"</span>
        <Caret />
      </Cell>
      <div className="flex">
        <Cell w="w-[41px]" label="工作空间"><Gear size={14} /><Caret /></Cell>
        <Cell w="w-[25px]" label="注释监视器" open><Svg><path d="M8 1v14M1 8h14" stroke="#c6c6c6" strokeWidth="2" /></Svg></Cell>
      </div>
      <div className="flex">
        <Cell w="w-[96px]" label="详细程度"><span className="whitespace-nowrap">Medium Detail</span><Caret /></Cell>
        <Cell w="w-[90px]" open>
          <Svg><path d="M1 6q0-5 7-5t7 5" stroke="#ccc" strokeDasharray="1 1" /><path d="M1 10v2l7 4 7-4v-2l-7 3z" fill="#c9c9c9" /><path d="M0 8l8-4 8 4-8 4z" fill="#8fbf6b" /></Svg>
          <span>42.00000</span>
        </Cell>
      </div>
      <Cell w="w-[84px]">
        <Svg><path d="M5 5l5-3 5 3v6l-5 4-5-4zM5 5l5 3 5-3M10 8v7" stroke="#c6c6c6" /><path d="M1 1h4L1 5h4" stroke="#111" /><path d="M1 10h4v4H1z" fill="#10e010" stroke="#111" /></Svg>
        <span>+0.00000</span>
      </Cell>
      <Cell w="w-[26px]" label="隔离对象"><Svg><path d="M1.500 1.500h6v6h-6zM5.500 14.500l4-6 4 6z" stroke="#c6c6c6" /><circle cx="12.500" cy="5" r="3" stroke="#c6c6c6" /></Svg></Cell>
      <Cell w="w-[26px]" label="硬件加速"><Svg w={18} h={18}><circle cx="9" cy="9" r="8" fill="#1257a8" stroke="#1f86ee" /><path d="M8 10l5-5" stroke="#6db8ff" strokeWidth="2" /></Svg></Cell>
      <Cell w="w-[81px]">
        <Svg w={14}><path d="M1 5h9v10H1z" fill="#2463a8" /><path d="M1 9l6 6M1 6l9 9M4 5l6 6" stroke="#69b0f5" /><path d="M1 5l3-3h9v9l-3 4M10 5l3-3" stroke="#777" /></Svg>
        <Svg w={18}><path d="M1.500 10.500h10l5-7h-10zM2 13.500h9" stroke="#2f8fff" /><path d="M9 1v13M5 7h8" stroke="#69a8e5" /></Svg>
        <Svg w={17}><path d="M3 1h8l3 3v6H3z" fill="#dbe8f5" stroke="#3a69a0" /><path d="M1 9h9v6H1z" fill="#ffd84a" /><path d="M8 11l3 4 6-7" stroke="#22b022" strokeWidth="2" /></Svg>
        <Svg w={14}><path d="M1.500 3l4-2h5v3l-4 1v10h-5z" stroke="#ccc" fill="#777" /><path d="M9 6l5 9H4z" fill="#f06a1c" /><path d="M9 9v3M9 13v1" stroke="#fff" /></Svg>
      </Cell>
      <Cell w="w-[50px]">
        <Svg w={17}><path d="M.500 1.500h15v13H.500z" stroke="#d0d0d0" /><path d="M9 4h4v4zM7 12H3V8z" fill="#d0d0d0" stroke="#d0d0d0" /></Svg>
        <Svg><path d="M0 3h16M0 8h16M0 13h16" stroke="#c6c6c6" strokeWidth="2" /></Svg>
      </Cell>
    </footer>
  );
}

export default function App() {
  return (
    <div className="min-h-screen min-w-[1342px] bg-black font-['Noto_Sans','Noto_Sans_CJK_SC',sans-serif]">
      <div className="flex min-h-screen flex-col rounded-lg border border-[#41454d] bg-linear-to-r from-[#dbe3ec] via-[#cdd8e5] to-[#d3dde9] px-[7px] pb-[7px]">
        <div className="relative flex flex-1 flex-col">
          <div className="-mt-px"><TitleBar /></div>
          <RibbonTabs />
          <Ribbon />
          <DrawingTabs />
          <main className="relative min-h-[540px] flex-1 overflow-hidden bg-white">
            <FloorPlan />
            <ViewControls />
            <Palette />
          </main>
          <CommandLine />
          <LayoutTabs />
          <StatusBar />
          <AppButton />
        </div>
      </div>
    </div>
  );
}
